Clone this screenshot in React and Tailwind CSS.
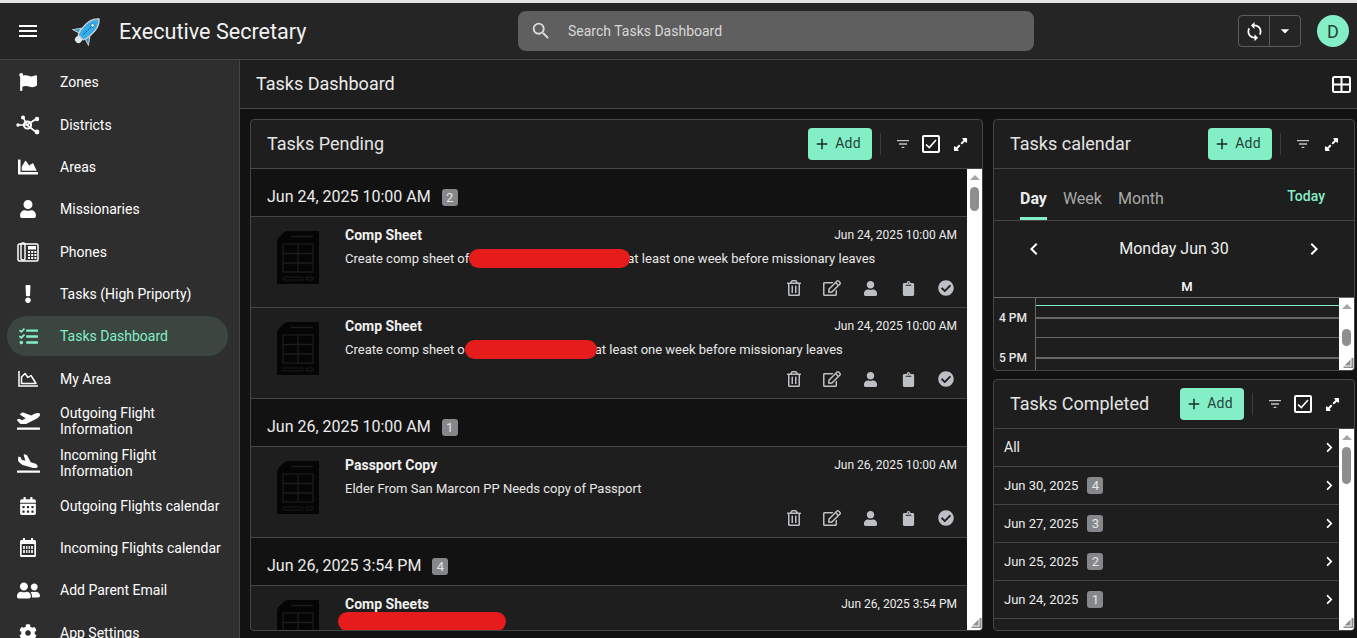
import React from 'react';
import {
  FaFlag, FaChartArea, FaUser, FaExclamation, FaTasks, FaPlaneDeparture, FaPlaneArrival,
  FaCalendarAlt, FaUserFriends, FaCog, FaRegTrashAlt, FaRegEdit, FaClipboard, FaCheckCircle,
  FaExpandAlt, FaChevronRight,
} from 'react-icons/fa';
import {
  MdMenu, MdSearch, MdSync, MdArrowDropDown, MdFilterList, MdAdd, MdChevronLeft, MdChevronRight,
} from 'react-icons/md';

const HubIcon = () => (
  <svg width="24" height="20" viewBox="0 0 24 20" fill="currentColor" stroke="currentColor">
    <path d="M2 10H11M7 2L11 10M11 10L20 4M11 10L20 17" strokeWidth="1.6" fill="none" />
    <circle cx="2" cy="10" r="1.7" stroke="none" />
    <circle cx="7" cy="2.5" r="2" stroke="none" />
    <circle cx="21" cy="4" r="2.2" stroke="none" />
    <circle cx="21" cy="17" r="2.4" stroke="none" />
    <circle cx="11.5" cy="10" r="3.6" fill="none" strokeWidth="2" />
  </svg>
);

const PhoneIcon = () => (
  <svg width="22" height="20" viewBox="0 0 22 20" fill="none" stroke="currentColor">
    <rect x="1" y="2" width="20" height="17" rx="1.5" strokeWidth="1.5" />
    <rect x="4" y="1" width="4" height="17" rx="1.5" strokeWidth="1.4" />
    <rect x="11" y="4" width="8" height="3.5" fill="currentColor" stroke="none" />
    <path d="M11 10h2M14.2 10h2M17.4 10h2M11 13h2M14.2 13h2M17.4 13h2M11 16h2M14.2 16h2M17.4 16h2" strokeWidth="2" />
  </svg>
);

const LineAreaIcon = () => (
  <svg width="20" height="16" viewBox="0 0 20 16" fill="none" stroke="currentColor" strokeWidth="1.5">
    <path d="M1 0V15H20" />
    <path d="M3.5 12.5V6L7 2.5L10 6.5L13 4.5L18 12.5Z" strokeLinejoin="round" />
  </svg>
);

const GridCalendarIcon = () => (
  <svg width="16" height="19" viewBox="0 0 16 19">
    <path d="M3 0h2v2h6V0h2v2h1.5A1.5 1.5 0 0 1 16 3.5v14a1.5 1.5 0 0 1-1.5 1.5h-13A1.5 1.5 0 0 1 0 17.500v-14A1.500 1.500 0 0 1 1.500 2H3z" fill="#fff" />
    <rect x="1.700" y="6" width="12.600" height="11" fill="#2e2e2e" />
    <rect x="3" y="8" width="10" height="7" fill="#ddd" />
    <path d="M5.500 8v7M8 8v7M10.500 8v7M3 11.500h10" stroke="#2e2e2e" strokeWidth="1" />
  </svg>
);

const Rocket = () => (
  <svg width="30" height="30" viewBox="0 0 30 30">
    <g transform="rotate(45 15 15)">
      <ellipse cx="15" cy="27" rx="3.500" ry="3.500" fill="#dbe7ee" />
      <path d="M9 17L4 24L10.500 22Z M21 17L26 24L19.500 22Z" fill="#2b9fe0" stroke="#c9c9c9" strokeWidth="1" />
      <path d="M15 -2C20 2 21 9 20.500 15C20.300 19 19.500 22 18.500 24H11.500C10.500 22 9.700 19 9.500 15C9 9 10 2 15 -2Z" fill="#34ade9" stroke="#d4d4d4" strokeWidth="1.300" />
      <path d="M15 9V21" stroke="#0d4d78" strokeWidth="0.900" strokeDasharray="2 1" />
      <circle cx="15" cy="7" r="1.800" fill="#e8f6ff" stroke="#0d4d78" strokeWidth="0.600" />
    </g>
  </svg>
);

const SheetIcon = () => (
  <svg width="42" height="53" viewBox="0 0 42 53" className="mt-[5px] shrink-0">
    <path d="M10 0H42V53H0V10Z" fill="#050505" />
    <path d="M0 8.500L8.500 0V8.500Z" fill="#050505" />
    <path d="M14 5.500H36" stroke="#1c1c1c" strokeWidth="1.500" />
    <rect x="6" y="13" width="30" height="28" fill="none" stroke="#1c1c1c" strokeWidth="1.300" />
    <path d="M21 13V41M6 22.500H36M6 32H36" stroke="#1c1c1c" strokeWidth="1.300" />
    <rect x="6" y="46" width="20" height="3" rx="1" fill="none" stroke="#1c1c1c" strokeWidth="1" />
    <rect x="29" y="46" width="7" height="3" rx="1" fill="none" stroke="#1c1c1c" strokeWidth="1" />
  </svg>
);

const TableIcon = () => (
  <svg width="19" height="17" viewBox="0 0 19 17" fill="none" stroke="#fff" strokeWidth="2">
    <rect x="1" y="1" width="17" height="15" rx="1.500" />
    <path d="M9.500 1V16M1 8.500H18" />
  </svg>
);

const CheckBoxIcon = () => (
  <span className="flex h-[18px] w-[18px] items-center justify-center rounded-[2px] border-2 border-white">
    <svg width="12" height="10" viewBox="0 0 12 10" fill="none" stroke="#fff" strokeWidth="1.600">
      <path d="M1 5.500L4.300 8.500L11 1" />
    </svg>
  </span>
);

const navItems = [
  { label: 'Zones', icon: <FaFlag size={18} /> },
  { label: 'Districts', icon: <HubIcon /> },
  { label: 'Areas', icon: <FaChartArea size={20} /> },
  { label: 'Missionaries', icon: <FaUser size={18} /> },
  { label: 'Phones', icon: <PhoneIcon /> },
  { label: 'Tasks (High Priporty)', icon: <FaExclamation size={18} /> },
  { label: 'Tasks Dashboard', icon: <FaTasks size={19} />, active: true },
  { label: 'My Area', icon: <LineAreaIcon /> },
  { label: 'Outgoing Flight Information', icon: <FaPlaneDeparture size={23} /> },
  { label: 'Incoming Flight Information', icon: <FaPlaneArrival size={23} /> },
  { label: 'Outgoing Flights calendar', icon: <FaCalendarAlt size={18} /> },
  { label: 'Incoming Flights calendar', icon: <GridCalendarIcon /> },
  { label: 'Add Parent Email', icon: <FaUserFriends size={23} /> },
  { label: 'App Settings', icon: <FaCog size={18} /> },
];

const pendingGroups = [
  {
    date: 'Jun 24, 2025 10:00 AM',
    count: 2,
    tasks: [
      { title: 'Comp Sheet', date: 'Jun 24, 2025 10:00 AM', before: 'Create comp sheet of', redact: 'w-[161px] -mr-[3px]', after: 'at least one week before missionary leaves' },
      { title: 'Comp Sheet', date: 'Jun 24, 2025 10:00 AM', before: 'Create comp sheet o', redact: 'w-[132px] -mr-[2px]', after: 'at least one week before missionary leaves' },
    ],
  },
  {
    date: 'Jun 26, 2025 10:00 AM',
    count: 1,
    tasks: [{ title: 'Passport Copy', date: 'Jun 26, 2025 10:00 AM', before: 'Elder From San Marcon PP Needs copy of Passport' }],
  },
  {
    date: 'Jun 26, 2025 3:54 PM',
    count: 4,
    tasks: [{ title: 'Comp Sheets', date: 'Jun 26, 2025 3:54 PM', redactOnly: true }],
  },
];

const completedRows = [
  { label: 'All' },
  { label: 'Jun 30, 2025', count: 4 },
  { label: 'Jun 27, 2025', count: 3 },
  { label: 'Jun 25, 2025', count: 2 },
  { label: 'Jun 24, 2025', count: 1 },
  { label: '', count: '' },
];

const Badge = ({ value, className = '' }) => (
  <span className={`flex h-[17px] w-[16px] items-center justify-center rounded-[3px] bg-[#85878a] text-[13px] leading-none text-[#e6e6e6] ${className}`}>
    {value}
  </span>
);

const AddButton = () => (
  <button className="flex h-8 w-16 items-center justify-center gap-1 rounded-[4px] bg-[#84efc6] pb-px pr-[6px] text-[14px] tracking-[0.2px] text-[#24423a]">
    <MdAdd size={18} className="text-[#15302a]" />
    Add
  </button>
);

const Toolbar = ({ title, check, inset = 'pr-[14px]' }) => (
  <div className={`flex h-[49px] shrink-0 items-center border-b border-[#464646] pl-4 ${inset}`}>
    <h2 className="flex-1 pb-[2px] text-[18px] font-normal text-[#e4e4e4]">{title}</h2>
    <AddButton />
    <span className="mx-2 h-[22px] w-px bg-[#3c3c3c]" />
    <MdFilterList size={16} className="ml-[6px] text-[#c4c4c4]" />
    {check ? <span className="ml-[11px]"><CheckBoxIcon /></span> : null}
    <FaExpandAlt size={15} className="ml-[13px] text-white" />
  </div>
);

const Scrollbar = ({ gap, thumb }) => (
  <div className="flex w-[15px] shrink-0 flex-col items-center bg-white">
    <span className="mt-[6px] h-0 w-0 border-x-[5px] border-b-[5px] border-x-transparent border-b-[#a6a6a6]" />
    <span className={`${gap} w-[9px] rounded-full bg-[#8e8e8e] ${thumb}`} />
    <svg width="11" height="10" viewBox="0 0 11 10" className="mt-auto mb-[2px] ml-[3px]">
      <path d="M0 0H11V10H9V2H0Z M2 3H8V9Z" fill="#8e8e8e" transform="rotate(90 5.500 5)" />
    </svg>
  </div>
);

const ActionIcon = ({ children }) => (
  <span className="flex w-[38px] justify-center">{children}</span>
);

const TaskRow = ({ task }) => (
  <div className="flex h-[91px] shrink-0 border-b border-[#464646] pl-[26px] pr-[10px] pt-[9px]">
    <SheetIcon />
    <div className="ml-[26px] min-w-0 flex-1">
      <div className="flex h-[18px] items-center justify-between">
        <span className="text-[14px] font-bold text-[#f0f0f0]">{task.title}</span>
        <span className="text-[12px] font-normal text-[#ececec]">{task.date}</span>
      </div>
      {task.redactOnly ? (
        <span className="-ml-[7px] mt-[-1px] block h-[19px] w-[168px] rounded-full bg-[#e61c1c]" />
      ) : (
        <p className="mt-[5px] flex h-[19px] items-center text-[13px] text-[#e8e8e8]">
          {task.before}
          {task.redact ? <span className={`relative z-10 h-[19px] rounded-full bg-[#e61c1c] ${task.redact}`} /> : null}
          {task.after}
        </p>
      )}
      <div className="-mr-2 mt-[10px] flex h-5 items-center justify-end text-[#bcc0c4]">
        <ActionIcon><FaRegTrashAlt size={16} /></ActionIcon>
        <ActionIcon><FaRegEdit size={18} /></ActionIcon>
        <ActionIcon><FaUser size={15} /></ActionIcon>
        <ActionIcon><FaClipboard size={15} /></ActionIcon>
        <ActionIcon><FaCheckCircle size={16} /></ActionIcon>
      </div>
    </div>
  </div>
);

export default function App() {
  return (
    <div className="flex h-[638px] w-[1357px] flex-col overflow-hidden bg-[#121212] font-['Roboto',sans-serif] text-white">
      <div className="h-[3px] shrink-0 bg-[#e4e4e4]" />

      <header className="flex h-[57px] shrink-0 items-center border-b border-[#464646] bg-[#252525]">
        <MdMenu size={24} className="ml-4 shrink-0" />
        <span className="ml-8"><Rocket /></span>
        <h1 className="ml-[17px] mt-[2px] w-[399px] shrink-0 text-[21.6px] font-normal text-[#f2f2f2]">Executive Secretary</h1>
        <div className="flex h-10 w-[516px] shrink-0 items-center rounded-lg bg-[#5f5f5f] pl-[12px]">
          <MdSearch size={22} className="text-[#dcdcdc]" />
          <span className="ml-[16px] text-[14px] text-[#d8d8d8]">Search Tasks Dashboard</span>
        </div>
        <div className="ml-[204px] flex h-8 w-[63px] shrink-0 items-center rounded-[4px] border border-[#5c5c5c]">
          <span className="flex h-full w-[31px] items-center justify-center border-r border-[#5c5c5c]">
            <MdSync size={21} />
          </span>
          <span className="flex flex-1 items-center justify-center"><MdArrowDropDown size={20} /></span>
        </div>
        <span className="ml-4 flex h-8 w-8 shrink-0 items-center justify-center rounded-full bg-[#84efc6] text-[18px] text-[#24423a]">D</span>
      </header>

      <div className="flex min-h-0 flex-1">
        <aside className="w-[240px] shrink-0 overflow-hidden border-r border-[#464646] bg-[#2e2e2e] pt-px">
          {navItems.map((item) => (
            <div key={item.label} className="flex h-[42.35px] items-center">
              <div className={`ml-[7px] flex h-10 w-[221px] items-center rounded-full ${item.active ? 'bg-[#3b4641] text-[#84efc6]' : 'text-white'}`}>
                <span className="flex w-[42px] shrink-0 justify-center">{item.icon}</span>
                <span className="ml-[11px] text-[14px] leading-[16px]">{item.label}</span>
              </div>
            </div>
          ))}
        </aside>

        <main className="flex min-w-0 flex-1 flex-col">
          <div className="flex h-[49px] shrink-0 items-center justify-between border-b border-[#464646] bg-[#1e1e1e] pl-4 pr-[6px]">
            <h2 className="pb-[2px] text-[18px] font-normal text-[#ececec]">Tasks Dashboard</h2>
            <TableIcon />
          </div>

          <div className="flex min-h-0 flex-1 gap-[10px] pb-[7px] pl-[10px] pr-[2px] pt-[10px]">
            <section className="flex w-[733px] shrink-0 flex-col overflow-hidden rounded-[4px] border border-[#464646] bg-[#1e1e1e]">
              <Toolbar title="Tasks Pending" check />
              <div className="flex min-h-0 flex-1">
                <div className="min-w-0 flex-1 overflow-hidden">
                  {pendingGroups.map((group) => (
                    <div key={group.date}>
                      <div className="flex h-[48px] items-center gap-[11px] border-b border-[#464646] bg-[#121212] pl-4 pt-2">
                        <span className="text-[16px] text-[#ececec]">{group.date}</span>
                        <Badge value={group.count} className="mt-[2px]" />
                      </div>
                      {group.tasks.map((task, i) => <TaskRow key={i} task={task} />)}
                    </div>
                  ))}
                </div>
                <Scrollbar gap="mt-[7px]" thumb="h-[24px]" />
              </div>
            </section>

            <div className="flex min-w-0 flex-1 flex-col gap-[8px]">
              <section className="flex h-[252px] shrink-0 flex-col overflow-hidden rounded-[4px] border border-[#464646] bg-[#1e1e1e]">
                <Toolbar title="Tasks calendar" inset="pr-[15px]" />
                <div className="flex h-[52px] shrink-0 items-end border-b border-[#464646] pl-[26px] pr-[29px]">
                  <span className="flex h-[42px] items-center border-b-[3px] border-[#84efc6] pt-[2px] text-[16px] font-bold text-[#ececec]">Day</span>
                  <span className="ml-4 flex h-[42px] items-center border-b-[3px] border-transparent pt-[2px] text-[16px] text-[#a9a9a9]">Week</span>
                  <span className="ml-4 flex h-[42px] items-center border-b-[3px] border-transparent pt-[2px] text-[16px] text-[#a9a9a9]">Month</span>
                  <span className="mb-[13px] ml-auto text-[14px] font-medium text-[#84efc6]">Today</span>
                </div>
                <div className="flex h-[56px] shrink-0 items-center justify-between pb-[1px] pl-[28px] pr-[28px]">
                  <MdChevronLeft size={24} />
                  <span className="text-[16px] text-[#f0f0f0]">Monday Jun 30</span>
                  <MdChevronRight size={24} />
                </div>
                <div className="h-[21px] shrink-0 border-b border-[#6a6a6a] pl-[41px] pr-[15px] pt-[2px] text-center text-[13px] font-medium leading-[16px]">M</div>
                <div className="flex min-h-0 flex-1">
                  <div className="w-[42px] shrink-0 border-r border-[#6a6a6a] pl-[5px] pt-[13px] text-[12px] font-medium leading-[14px] text-[#e8e8e8]">
                    <div>4 PM</div>
                    <div className="mt-[26px]">5 PM</div>
                  </div>
                  <div className="min-w-0 flex-1 pt-[7px]">
                    <div className="h-px bg-[#84efc6]" />
                    <div className="mt-[11px] h-[2px] bg-[#666]" />
                    <div className="mt-[18px] h-px bg-[#666]" />
                    <div className="mt-[19px] h-[2px] bg-[#666]" />
                  </div>
                  <Scrollbar gap="mt-[20px]" thumb="h-[17px]" />
                </div>
              </section>

              <section className="flex min-h-0 flex-1 flex-col overflow-hidden rounded-[4px] border border-[#464646] bg-[#1e1e1e]">
                <Toolbar title="Tasks Completed" check />
                <div className="flex min-h-0 flex-1">
                  <div className="min-w-0 flex-1 overflow-hidden">
                    {completedRows.map((row, i) => (
                      <div key={i} className="flex h-[38px] items-center border-b border-[#464646] pl-[10px] pr-1">
                        <span className={`text-[#ececec] ${row.count ? 'text-[13px]' : 'text-[14px]'}`}>{row.label}</span>
                        {row.count ? <Badge value={row.count} className="ml-[9px]" /> : null}
                        {row.label ? <FaChevronRight size={11} className="ml-auto" /> : null}
                      </div>
                    ))}
                  </div>
                  <Scrollbar gap="mt-[7px]" thumb="h-[37px]" />
                </div>
              </section>
            </div>
          </div>
        </main>
      </div>
    </div>
  );
}
